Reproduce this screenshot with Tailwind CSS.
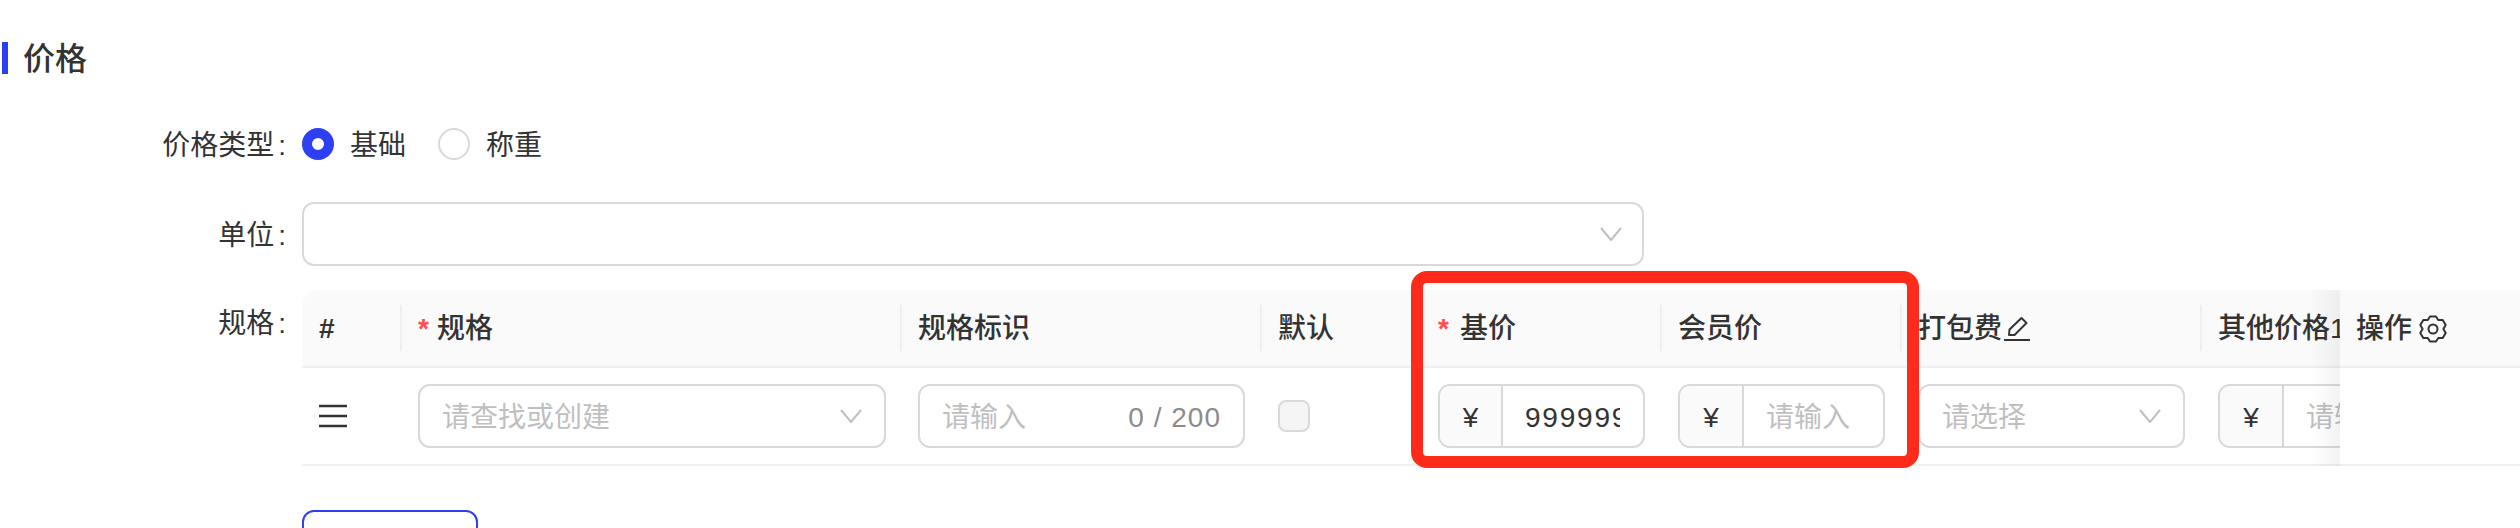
<!DOCTYPE html>
<html lang="zh-CN">
<head>
  <meta charset="UTF-8">
  <title>价格</title>
  <script src="https://cdn.jsdelivr.net/npm/@tailwindcss/browser@4"></script>
</head>
<body class="relative w-[2520px] h-[528px] overflow-hidden bg-white text-[#333] text-[28px] leading-[40px] font-['Liberation_Sans','Noto_Sans_CJK_SC',sans-serif]">
  <!-- 标题 -->
  <div class="ml-[2px] pt-[42px] flex items-center h-[74px]">
    <div class="w-[6px] h-[32px] bg-[#2d3ff2]"></div>
    <h2 class="ml-[15px] pt-[2px] text-[32px] font-medium">价格</h2>
  </div>

  <!-- 价格类型 -->
  <div class="mt-[50px] flex items-center h-[40px]">
    <label class="w-[286px] pt-[4px] text-right">价格类型<span class="ml-[4px]">:</span></label>
    <div class="ml-[16px] flex items-center">
      <span class="w-[32px] h-[32px] rounded-full border-[10px] border-[#2d3ff2] bg-white"></span>
      <span class="ml-[16px] pt-[4px]">基础</span>
      <span class="ml-[32px] w-[32px] h-[32px] rounded-full border-2 border-[#d9d9d9]"></span>
      <span class="ml-[16px] pt-[4px]">称重</span>
    </div>
  </div>

  <!-- 单位 -->
  <div class="mt-[38px] flex items-center h-[64px]">
    <label class="w-[286px] pt-[4px] text-right">单位<span class="ml-[4px]">:</span></label>
    <div class="ml-[16px] w-[1342px] h-[64px] border-2 border-[#d9d9d9] rounded-[12px] flex items-center justify-end pr-[20px]">
      <svg class="w-[22px] h-[14px]" viewBox="0 0 22 14" fill="none" stroke="#bfbfbf" stroke-width="2"><path d="M1 1l10 12L21 1"/></svg>
    </div>
  </div>

  <!-- 规格 -->
  <div class="mt-[24px] flex">
    <label class="w-[286px] text-right pt-[14px]">规格<span class="ml-[4px]">:</span></label>
    <div class="ml-[16px] w-[2218px] relative">
      <div class="grid grid-cols-[100px_500px_360px_160px_240px_240px_300px_318px] font-medium">
        <div class="relative h-[78px] pt-[2px] border-b-2 border-[#f0f0f0] bg-[#fafafa] rounded-tl-[16px] pl-[17px] flex items-center font-bold after:absolute after:right-0 after:top-[15px] after:h-[46px] after:w-[2px] after:bg-[#f0f0f0]">#</div>
        <div class="relative h-[78px] pt-[2px] border-b-2 border-[#f0f0f0] bg-[#fafafa] pl-[16px] flex items-center after:absolute after:right-0 after:top-[15px] after:h-[46px] after:w-[2px] after:bg-[#f0f0f0]"><span class="text-[#ff4d4f] mr-[8px] font-bold">*</span>规格</div>
        <div class="relative h-[78px] pt-[2px] border-b-2 border-[#f0f0f0] bg-[#fafafa] pl-[16px] flex items-center after:absolute after:right-0 after:top-[15px] after:h-[46px] after:w-[2px] after:bg-[#f0f0f0]">规格标识</div>
        <div class="relative h-[78px] pt-[2px] border-b-2 border-[#f0f0f0] bg-[#fafafa] pl-[16px] flex items-center after:absolute after:right-0 after:top-[15px] after:h-[46px] after:w-[2px] after:bg-[#f0f0f0]">默认</div>
        <div class="relative h-[78px] pt-[2px] border-b-2 border-[#f0f0f0] bg-[#fafafa] pl-[16px] flex items-center after:absolute after:right-0 after:top-[15px] after:h-[46px] after:w-[2px] after:bg-[#f0f0f0]"><span class="text-[#ff4d4f] mr-[11px] font-bold">*</span>基价</div>
        <div class="relative h-[78px] pt-[2px] border-b-2 border-[#f0f0f0] bg-[#fafafa] pl-[16px] flex items-center after:absolute after:right-0 after:top-[15px] after:h-[46px] after:w-[2px] after:bg-[#f0f0f0]">会员价</div>
        <div class="relative h-[78px] pt-[2px] border-b-2 border-[#f0f0f0] bg-[#fafafa] pl-[16px] flex items-center after:absolute after:right-0 after:top-[15px] after:h-[46px] after:w-[2px] after:bg-[#f0f0f0]">打包费
          <svg class="ml-[2px] w-[26px] h-[26px]" viewBox="0 0 26 26" fill="none" stroke="#333" stroke-width="2"><path d="M0 24h26"/><path d="M5 19l.5-5.500L17.500 2l5 5-12 12z" stroke-linejoin="round"/></svg>
        </div>
        <div class="relative h-[78px] pt-[2px] border-b-2 border-[#f0f0f0] bg-[#fafafa] pl-[16px] flex items-center whitespace-nowrap">其他价格1</div>

        <div class="h-[98px] border-b-2 border-[#f0f0f0] pl-[17px] flex items-center">
          <svg class="w-[28px] h-[24px]" viewBox="0 0 28 24" fill="none" stroke="#333" stroke-width="2.4"><path d="M0 2h28M0 12h28M0 22h28"/></svg>
        </div>
        <div class="h-[98px] border-b-2 border-[#f0f0f0] pl-[16px] flex items-center font-normal">
          <div class="w-[468px] h-[64px] border-2 border-[#d9d9d9] rounded-[12px] flex items-center justify-between pl-[22px] pr-[22px] text-[#bfbfbf]"><span class="pt-[4px]">请查找或创建</span>
            <svg class="w-[22px] h-[14px]" viewBox="0 0 22 14" fill="none" stroke="#bfbfbf" stroke-width="2"><path d="M1 1l10 12L21 1"/></svg>
          </div>
        </div>
        <div class="h-[98px] border-b-2 border-[#f0f0f0] pl-[16px] flex items-center font-normal">
          <div class="w-[327px] h-[64px] border-2 border-[#d9d9d9] rounded-[12px] flex items-center justify-between pl-[22px] pr-[22px] text-[#bfbfbf]"><span class="pt-[4px]">请输入</span><span class="pt-[4px] text-[#8c8c8c] tracking-[1px]">0 / 200</span></div>
        </div>
        <div class="h-[98px] border-b-2 border-[#f0f0f0] pl-[16px] flex items-center">
          <span class="w-[32px] h-[32px] bg-[#f5f5f5] border-2 border-[#d9d9d9] rounded-[8px]"></span>
        </div>
        <div class="h-[98px] border-b-2 border-[#f0f0f0] pl-[16px] flex items-center font-normal">
          <div class="w-[207px] h-[64px] border-2 border-[#d9d9d9] rounded-[12px] flex items-center overflow-hidden">
            <span class="w-[63px] h-full pt-[3px] bg-[#fafafa] border-r-2 border-[#d9d9d9] flex items-center justify-center">¥</span>
            <span class="ml-[22px] w-[95px] pt-[3px] overflow-hidden whitespace-nowrap tracking-[1.8px]">9999999</span>
          </div>
        </div>
        <div class="h-[98px] border-b-2 border-[#f0f0f0] pl-[16px] flex items-center font-normal">
          <div class="w-[207px] h-[64px] border-2 border-[#d9d9d9] rounded-[12px] flex items-center overflow-hidden">
            <span class="w-[64px] h-full pt-[3px] bg-[#fafafa] border-r-2 border-[#d9d9d9] flex items-center justify-center">¥</span>
            <span class="ml-[22px] pt-[4px] text-[#bfbfbf]">请输入</span>
          </div>
        </div>
        <div class="h-[98px] border-b-2 border-[#f0f0f0] pl-[16px] flex items-center font-normal">
          <div class="w-[267px] h-[64px] border-2 border-[#d9d9d9] rounded-[12px] flex items-center justify-between pl-[22px] pr-[22px] text-[#bfbfbf]"><span class="pt-[4px]">请选择</span>
            <svg class="w-[22px] h-[14px]" viewBox="0 0 22 14" fill="none" stroke="#bfbfbf" stroke-width="2"><path d="M1 1l10 12L21 1"/></svg>
          </div>
        </div>
        <div class="h-[98px] border-b-2 border-[#f0f0f0] pl-[16px] flex items-center font-normal">
          <div class="w-[207px] h-[64px] border-2 border-[#d9d9d9] rounded-[12px] flex items-center overflow-hidden">
            <span class="w-[64px] h-full pt-[3px] bg-[#fafafa] border-r-2 border-[#d9d9d9] flex items-center justify-center">¥</span>
            <span class="ml-[22px] pt-[4px] text-[#bfbfbf]">请输入</span>
          </div>
        </div>
      </div>

      <!-- 固定列 -->
      <div class="absolute right-0 top-0 w-[180px] h-[176px] bg-white font-medium">
        <div class="absolute left-[-30px] top-0 w-[30px] h-full bg-gradient-to-l from-black/5 to-transparent"></div>
        <div class="h-[78px] pt-[2px] bg-[#fafafa] border-b-2 border-[#f0f0f0] pl-[16px] flex items-center">操作
          <svg class="ml-[7px] w-[28px] h-[28px]" viewBox="0 0 28 28" fill="none" stroke="#333" stroke-width="2" stroke-linejoin="round"><path d="M11 1.500h6l2.200 3.500 4.500-.100 3 5.200-2.300 3.900 2.300 3.900-3 5.200-4.500-.100-2.200 3.500h-6l-2.200-3.500-4.500.100-3-5.200 2.300-3.900-2.300-3.900 3-5.200 4.500.100z"/><circle cx="14" cy="14" r="4.500"/></svg>
        </div>
        <div class="h-[98px] border-b-2 border-[#f0f0f0]"></div>
      </div>

      <button class="block mt-[44px] w-[176px] h-[64px] border-2 border-[#2d3ff2] rounded-[12px]"></button>
    </div>
  </div>

  <!-- 标注框 -->
  <div class="absolute left-[1411px] top-[271px] w-[508px] h-[197px] border-[12px] border-[#ff2a1a] rounded-[16px]"></div>
</body>
</html>
